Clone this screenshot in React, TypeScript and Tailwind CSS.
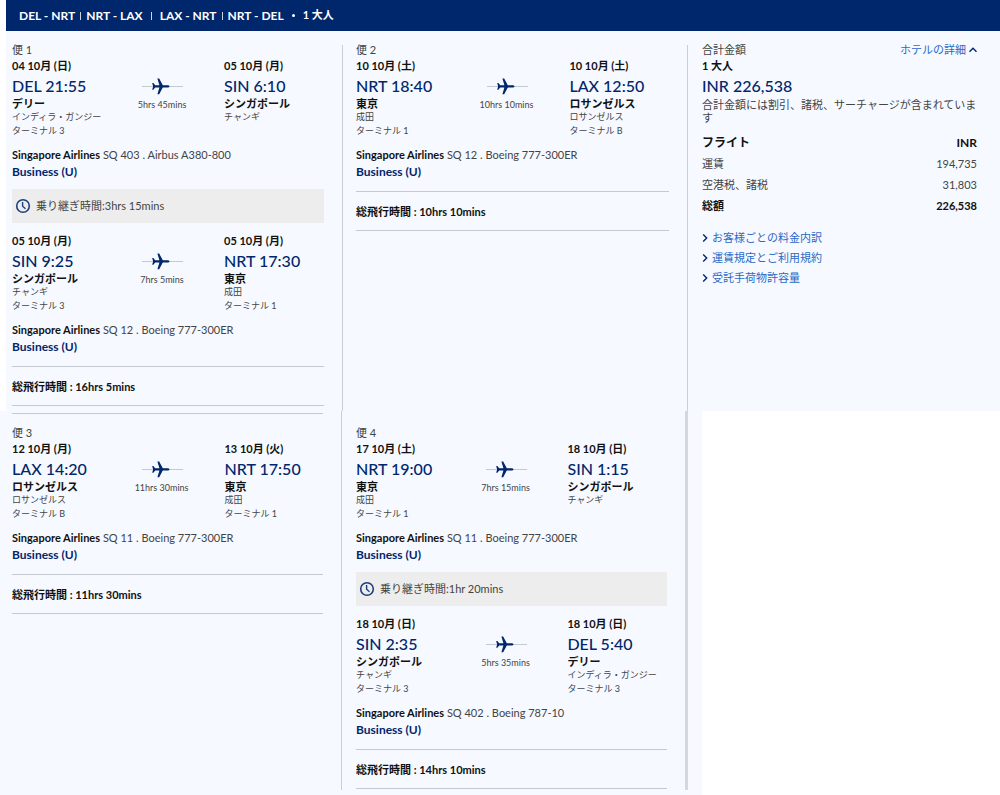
import React from "react";

type Stop = {
  date: string;
  time: string;
  city: string;
  airport: string;
  terminal?: string;
};

type Segment = {
  from: Stop;
  to: Stop;
  duration: string;
  flight: string;
  layover?: string;
};

type Trip = {
  title: string;
  total: string;
  segments: Segment[];
};

const trips: Trip[] = [
  {
    title: "便 1",
    total: "16hrs 5mins",
    segments: [
      {
        from: { date: "04 10月 (日)", time: "DEL 21:55", city: "デリー", airport: "インディラ・ガンジー", terminal: "ターミナル 3" },
        to: { date: "05 10月 (月)", time: "SIN 6:10", city: "シンガポール", airport: "チャンギ" },
        duration: "5hrs 45mins",
        flight: "SQ 403 . Airbus A380-800",
        layover: "3hrs 15mins",
      },
      {
        from: { date: "05 10月 (月)", time: "SIN 9:25", city: "シンガポール", airport: "チャンギ", terminal: "ターミナル 3" },
        to: { date: "05 10月 (月)", time: "NRT 17:30", city: "東京", airport: "成田", terminal: "ターミナル 1" },
        duration: "7hrs 5mins",
        flight: "SQ 12 . Boeing 777-300ER",
      },
    ],
  },
  {
    title: "便 2",
    total: "10hrs 10mins",
    segments: [
      {
        from: { date: "10 10月 (土)", time: "NRT 18:40", city: "東京", airport: "成田", terminal: "ターミナル 1" },
        to: { date: "10 10月 (土)", time: "LAX 12:50", city: "ロサンゼルス", airport: "ロサンゼルス", terminal: "ターミナル B" },
        duration: "10hrs 10mins",
        flight: "SQ 12 . Boeing 777-300ER",
      },
    ],
  },
  {
    title: "便 3",
    total: "11hrs 30mins",
    segments: [
      {
        from: { date: "12 10月 (月)", time: "LAX 14:20", city: "ロサンゼルス", airport: "ロサンゼルス", terminal: "ターミナル B" },
        to: { date: "13 10月 (火)", time: "NRT 17:50", city: "東京", airport: "成田", terminal: "ターミナル 1" },
        duration: "11hrs 30mins",
        flight: "SQ 11 . Boeing 777-300ER",
      },
    ],
  },
  {
    title: "便 4",
    total: "14hrs 10mins",
    segments: [
      {
        from: { date: "17 10月 (土)", time: "NRT 19:00", city: "東京", airport: "成田", terminal: "ターミナル 1" },
        to: { date: "18 10月 (日)", time: "SIN 1:15", city: "シンガポール", airport: "チャンギ" },
        duration: "7hrs 15mins",
        flight: "SQ 11 . Boeing 777-300ER",
        layover: "1hr 20mins",
      },
      {
        from: { date: "18 10月 (日)", time: "SIN 2:35", city: "シンガポール", airport: "チャンギ", terminal: "ターミナル 3" },
        to: { date: "18 10月 (日)", time: "DEL 5:40", city: "デリー", airport: "インディラ・ガンジー", terminal: "ターミナル 3" },
        duration: "5hrs 35mins",
        flight: "SQ 402 . Boeing 787-10",
      },
    ],
  },
];

const fares = [
  { label: "運賃", amount: "194,735" },
  { label: "空港税、諸税", amount: "31,803" },
];

const links = ["お客様ごとの料金内訳", "運賃規定とご利用規約", "受託手荷物許容量"];

function PlaneIcon() {
  return (
    <svg viewBox="0 0 42 18" className="w-[42px] h-[18px]" aria-hidden="true">
      <path d="M1 9.500h41" stroke="#c3cbd0" strokeWidth="1" />
      <path
        d="M28.500 9.400c0-.7-1-1.200-2.400-1.200h-4.300L18.200 1.500h-1.800l2 6.700h-4.200l-1.800-2.200h-1.200l.9 3.400-.9 3.400h1.200l1.800-2.200h4.200l-2 6.700h1.800l3.600-6.700h4.300c1.400 0 2.400-.5 2.400-1.200z"
        fill="#00266b"
      />
    </svg>
  );
}

function ClockIcon() {
  return (
    <svg viewBox="0 0 16 16" className="w-4 h-4" fill="none" stroke="#1d3f7f" aria-hidden="true">
      <circle cx="8" cy="8" r="6.300" strokeWidth="1.600" />
      <path d="M7.600 4v4.300l2.900 2.500" strokeWidth="1.400" />
    </svg>
  );
}

function StopInfo({ stop }: { stop: Stop }) {
  return (
    <div className="whitespace-nowrap">
      <p className="text-[11px] leading-4 font-bold text-[#111]">{stop.date}</p>
      <p className="text-base leading-6 font-medium text-[#00266b]">{stop.time}</p>
      <p className="text-[11px] leading-3 font-bold text-[#111]">{stop.city}</p>
      <p className="text-[9px] leading-[14px]">{stop.airport}</p>
      {stop.terminal && <p className="text-[9px] leading-[14px]">{stop.terminal}</p>}
    </div>
  );
}

function SegmentInfo({ segment }: { segment: Segment }) {
  return (
    <div>
      <div className="grid grid-cols-[124fr_52fr_136fr]">
        <StopInfo stop={segment.from} />
        <div className="flex flex-col items-center pt-[19px] whitespace-nowrap">
          <PlaneIcon />
          <p className="mt-[3px] text-[9px] leading-[14px]">{segment.duration}</p>
        </div>
        <div className="pl-9">
          <StopInfo stop={segment.to} />
        </div>
      </div>
      <p className="mt-[9px] text-[11px] leading-4">
        <b className="text-[#111]">Singapore Airlines</b> {segment.flight}
      </p>
      <p className="text-xs leading-[17px] font-bold text-[#00266b]">Business (U)</p>
      {segment.layover && (
        <div className="mt-[9px] mb-2.5 flex h-[34px] items-center gap-[5px] bg-[#ededed] pl-[3px] text-[11px]">
          <ClockIcon />
          <span>乗り継ぎ時間:{segment.layover}</span>
        </div>
      )}
    </div>
  );
}

function TripInfo({ trip }: { trip: Trip }) {
  return (
    <article>
      <h2 className="mb-[3px] text-[11px] leading-[10px]">{trip.title}</h2>
      {trip.segments.map((segment) => (
        <SegmentInfo key={segment.from.time} segment={segment} />
      ))}
      <p className="mt-[11px] flex h-10 items-center border-y border-[#c3cbd0] pt-0.5 text-[11px] font-bold text-[#111]">
        総飛行時間 : {trip.total}
      </p>
    </article>
  );
}

function Chevron({ up }: { up?: boolean }) {
  return (
    <svg viewBox="0 0 8 8" className="w-2 h-2 shrink-0" fill="none" stroke="#00266b" strokeWidth="1.400" aria-hidden="true">
      {up ? <path d="M.5 5.800 4 2.300l3.500 3.500" /> : <path d="M1.200.5 4.700 4 1.200 7.500" />}
    </svg>
  );
}

function Summary() {
  return (
    <aside className="pl-3.5 pr-5">
      <div className="mb-[3px] flex items-center justify-between pr-[3px] text-[11px] leading-[10px]">
        <h2>合計金額</h2>
        <a href="#hotel" className="flex items-center gap-[3px] text-[#2a69c4]">
          ホテルの詳細
          <Chevron up />
        </a>
      </div>
      <p className="text-[11px] leading-4 font-bold text-[#111]">1 大人</p>
      <p className="text-base leading-6 font-medium text-[#00266b]">INR 226,538</p>
      <p className="text-[11px] leading-[13px]">
        合計金額には割引、諸税、サーチャージが含まれています
      </p>
      <div className="mt-2 pr-[3px]">
        <table className="w-full text-[11px]">
          <thead className="text-xs text-[#111]">
            <tr className="h-[22px]">
              <th className="text-left">フライト</th>
              <th className="text-right">INR</th>
            </tr>
          </thead>
          <tbody>
            {fares.map((fare) => (
              <tr key={fare.label} className="h-[21px]">
                <td>{fare.label}</td>
                <td className="text-right">{fare.amount}</td>
              </tr>
            ))}
            <tr className="h-[21px] font-bold text-[#111]">
              <td>総額</td>
              <td className="text-right">226,538</td>
            </tr>
          </tbody>
        </table>
      </div>
      <ul className="mt-[11px] text-[11px] leading-5">
        {links.map((link) => (
          <li key={link}>
            <a href="#fare" className="flex items-center gap-0.5 text-[#2a69c4]">
              <Chevron />
              {link}
            </a>
          </li>
        ))}
      </ul>
    </aside>
  );
}

function App() {
  return (
    <main className="bg-white font-['Lato','Noto_Sans_CJK_JP',sans-serif] text-[#444]">
      <section className="ml-1.5 bg-[#f6f9ff]">
        <header className="flex h-[31px] items-center bg-[#00266b] pl-[13px] text-xs font-bold text-white">
          <h1 className="flex items-center">
            <span>DEL - NRT</span>
            <span className="mx-[5px] h-2 w-px bg-white/80" />
            <span>NRT - LAX</span>
            <span className="mx-2 h-2 w-px bg-white/80" />
            <span>LAX - NRT</span>
            <span className="mx-[5px] h-2 w-px bg-white/80" />
            <span>NRT - DEL</span>
            <span className="mx-2 size-[3px] rounded-full bg-white" />
            <span className="text-[11px]">1 大人</span>
          </h1>
        </header>
        <div className="grid grid-cols-[337fr_345fr_312fr] pt-3.5">
          <div className="border-r border-[#c9d0d4] pb-[5px] pl-1.5 pr-[18px]">
            <TripInfo trip={trips[0]} />
          </div>
          <div className="border-r border-[#c9d0d4] pl-[13px] pr-[18px]">
            <TripInfo trip={trips[1]} />
          </div>
          <Summary />
        </div>
      </section>
      <section className="w-[70.2%] bg-[#f6f9ff] pb-[5px]">
        <div className="grid grid-cols-[342fr_346fr_14fr]">
          <div className="border-r border-[#c9d0d4] pl-3 pr-[18px] pt-0.5">
            <div className="border-t border-[#c3cbd0] pt-3.5">
              <TripInfo trip={trips[2]} />
            </div>
          </div>
          <div className="border-r-3 border-[#d3d9db] pb-px pl-3.5 pr-[18px] pt-[17px]">
            <TripInfo trip={trips[3]} />
          </div>
        </div>
      </section>
    </main>
  );
}

export default App;
